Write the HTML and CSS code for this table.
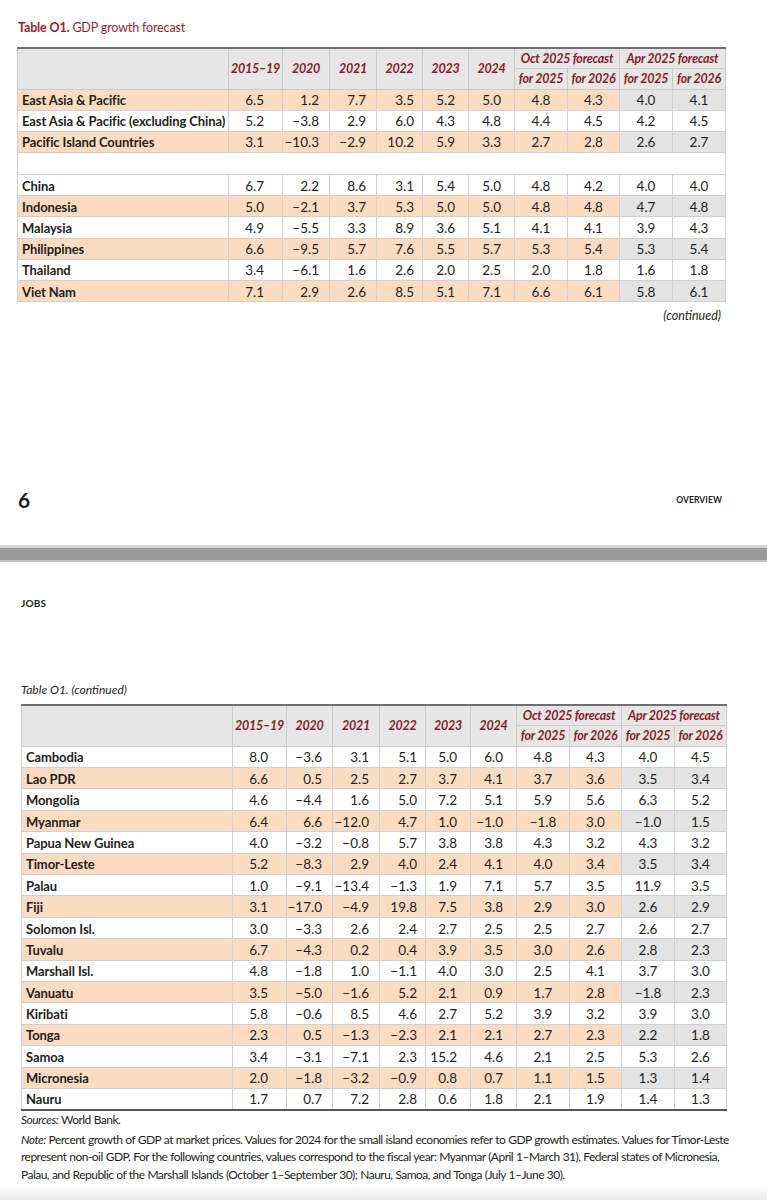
FILE: index.html
```html
<!DOCTYPE html>
<html lang="en">
<head>
<meta charset="utf-8">
<title>Table O1. GDP growth forecast</title>
<link rel="stylesheet" href="styles.css">
</head>
<body>
<section class="page page-one">
  <p class="title"><b>Table O1.</b> GDP growth forecast</p>
  <table class="gdp gdp-one">
    <colgroup>
      <col class="c-label1"><col class="c-a"><col class="c-b"><col class="c-b"><col class="c-c"><col class="c-c"><col class="c-d"><col class="c-e"><col class="c-f"><col class="c-e"><col class="c-e">
    </colgroup>
    <thead>
      <tr>
        <th rowspan="2"></th>
        <th rowspan="2">2015–19</th>
        <th rowspan="2">2020</th>
        <th rowspan="2">2021</th>
        <th rowspan="2">2022</th>
        <th rowspan="2">2023</th>
        <th rowspan="2">2024</th>
        <th colspan="2">Oct 2025 forecast</th>
        <th colspan="2">Apr 2025 forecast</th>
      </tr>
      <tr>
        <th>for 2025</th><th>for 2026</th><th>for 2025</th><th>for 2026</th>
      </tr>
    </thead>
    <tbody>
      <tr class="hl"><td>East Asia &amp; Pacific</td><td>6.5</td><td>1.2</td><td>7.7</td><td>3.5</td><td>5.2</td><td>5.0</td><td>4.8</td><td>4.3</td><td>4.0</td><td>4.1</td></tr>
      <tr><td>East Asia &amp; Pacific (excluding China)</td><td>5.2</td><td>−3.8</td><td>2.9</td><td>6.0</td><td>4.3</td><td>4.8</td><td>4.4</td><td>4.5</td><td>4.2</td><td>4.5</td></tr>
      <tr class="hl"><td>Pacific Island Countries</td><td>3.1</td><td>−10.3</td><td>−2.9</td><td>10.2</td><td>5.9</td><td>3.3</td><td>2.7</td><td>2.8</td><td>2.6</td><td>2.7</td></tr>
      <tr class="blank"><td colspan="11"></td></tr>
      <tr><td>China</td><td>6.7</td><td>2.2</td><td>8.6</td><td>3.1</td><td>5.4</td><td>5.0</td><td>4.8</td><td>4.2</td><td>4.0</td><td>4.0</td></tr>
      <tr class="hl"><td>Indonesia</td><td>5.0</td><td>−2.1</td><td>3.7</td><td>5.3</td><td>5.0</td><td>5.0</td><td>4.8</td><td>4.8</td><td>4.7</td><td>4.8</td></tr>
      <tr><td>Malaysia</td><td>4.9</td><td>−5.5</td><td>3.3</td><td>8.9</td><td>3.6</td><td>5.1</td><td>4.1</td><td>4.1</td><td>3.9</td><td>4.3</td></tr>
      <tr class="hl"><td>Philippines</td><td>6.6</td><td>−9.5</td><td>5.7</td><td>7.6</td><td>5.5</td><td>5.7</td><td>5.3</td><td>5.4</td><td>5.3</td><td>5.4</td></tr>
      <tr><td>Thailand</td><td>3.4</td><td>−6.1</td><td>1.6</td><td>2.6</td><td>2.0</td><td>2.5</td><td>2.0</td><td>1.8</td><td>1.6</td><td>1.8</td></tr>
      <tr class="hl"><td>Viet Nam</td><td>7.1</td><td>2.9</td><td>2.6</td><td>8.5</td><td>5.1</td><td>7.1</td><td>6.6</td><td>6.1</td><td>5.8</td><td>6.1</td></tr>
    </tbody>
  </table>
  <p class="continued">(continued)</p>
  <div class="folio">
    <span class="folio-num">6</span>
    <span class="folio-head">OVERVIEW</span>
  </div>
</section>

<div class="separator"></div>

<section class="page page-two">
  <p class="running-head">JOBS</p>
  <p class="caption">Table O1. (continued)</p>
  <table class="gdp gdp-two">
    <colgroup>
      <col class="c-label2"><col class="c-a"><col class="c-c"><col class="c-b"><col class="c-c"><col class="c-c2"><col class="c-c"><col class="c-e"><col class="c-f"><col class="c-e"><col class="c-f">
    </colgroup>
    <thead>
      <tr>
        <th rowspan="2"></th>
        <th rowspan="2">2015–19</th>
        <th rowspan="2">2020</th>
        <th rowspan="2">2021</th>
        <th rowspan="2">2022</th>
        <th rowspan="2">2023</th>
        <th rowspan="2">2024</th>
        <th colspan="2">Oct 2025 forecast</th>
        <th colspan="2">Apr 2025 forecast</th>
      </tr>
      <tr>
        <th>for 2025</th><th>for 2026</th><th>for 2025</th><th>for 2026</th>
      </tr>
    </thead>
    <tbody>
      <tr><td>Cambodia</td><td>8.0</td><td>−3.6</td><td>3.1</td><td>5.1</td><td>5.0</td><td>6.0</td><td>4.8</td><td>4.3</td><td>4.0</td><td>4.5</td></tr>
      <tr class="hl"><td>Lao PDR</td><td>6.6</td><td>0.5</td><td>2.5</td><td>2.7</td><td>3.7</td><td>4.1</td><td>3.7</td><td>3.6</td><td>3.5</td><td>3.4</td></tr>
      <tr><td>Mongolia</td><td>4.6</td><td>−4.4</td><td>1.6</td><td>5.0</td><td>7.2</td><td>5.1</td><td>5.9</td><td>5.6</td><td>6.3</td><td>5.2</td></tr>
      <tr class="hl"><td>Myanmar</td><td>6.4</td><td>6.6</td><td>−12.0</td><td>4.7</td><td>1.0</td><td>−1.0</td><td>−1.8</td><td>3.0</td><td>−1.0</td><td>1.5</td></tr>
      <tr><td>Papua New Guinea</td><td>4.0</td><td>−3.2</td><td>−0.8</td><td>5.7</td><td>3.8</td><td>3.8</td><td>4.3</td><td>3.2</td><td>4.3</td><td>3.2</td></tr>
      <tr class="hl"><td>Timor-Leste</td><td>5.2</td><td>−8.3</td><td>2.9</td><td>4.0</td><td>2.4</td><td>4.1</td><td>4.0</td><td>3.4</td><td>3.5</td><td>3.4</td></tr>
      <tr><td>Palau</td><td>1.0</td><td>−9.1</td><td>−13.4</td><td>−1.3</td><td>1.9</td><td>7.1</td><td>5.7</td><td>3.5</td><td>11.9</td><td>3.5</td></tr>
      <tr class="hl"><td>Fiji</td><td>3.1</td><td>−17.0</td><td>−4.9</td><td>19.8</td><td>7.5</td><td>3.8</td><td>2.9</td><td>3.0</td><td>2.6</td><td>2.9</td></tr>
      <tr><td>Solomon Isl.</td><td>3.0</td><td>−3.3</td><td>2.6</td><td>2.4</td><td>2.7</td><td>2.5</td><td>2.5</td><td>2.7</td><td>2.6</td><td>2.7</td></tr>
      <tr class="hl"><td>Tuvalu</td><td>6.7</td><td>−4.3</td><td>0.2</td><td>0.4</td><td>3.9</td><td>3.5</td><td>3.0</td><td>2.6</td><td>2.8</td><td>2.3</td></tr>
      <tr><td>Marshall Isl.</td><td>4.8</td><td>−1.8</td><td>1.0</td><td>−1.1</td><td>4.0</td><td>3.0</td><td>2.5</td><td>4.1</td><td>3.7</td><td>3.0</td></tr>
      <tr class="hl"><td>Vanuatu</td><td>3.5</td><td>−5.0</td><td>−1.6</td><td>5.2</td><td>2.1</td><td>0.9</td><td>1.7</td><td>2.8</td><td>−1.8</td><td>2.3</td></tr>
      <tr><td>Kiribati</td><td>5.8</td><td>−0.6</td><td>8.5</td><td>4.6</td><td>2.7</td><td>5.2</td><td>3.9</td><td>3.2</td><td>3.9</td><td>3.0</td></tr>
      <tr class="hl"><td>Tonga</td><td>2.3</td><td>0.5</td><td>−1.3</td><td>−2.3</td><td>2.1</td><td>2.1</td><td>2.7</td><td>2.3</td><td>2.2</td><td>1.8</td></tr>
      <tr><td>Samoa</td><td>3.4</td><td>−3.1</td><td>−7.1</td><td>2.3</td><td>15.2</td><td>4.6</td><td>2.1</td><td>2.5</td><td>5.3</td><td>2.6</td></tr>
      <tr class="hl"><td>Micronesia</td><td>2.0</td><td>−1.8</td><td>−3.2</td><td>−0.9</td><td>0.8</td><td>0.7</td><td>1.1</td><td>1.5</td><td>1.3</td><td>1.4</td></tr>
      <tr><td>Nauru</td><td>1.7</td><td>0.7</td><td>7.2</td><td>2.8</td><td>0.6</td><td>1.8</td><td>2.1</td><td>1.9</td><td>1.4</td><td>1.3</td></tr>
    </tbody>
  </table>
  <div class="notes">
    <p class="sources"><i>Sources:</i> World Bank.</p>
    <p><i>Note:</i> Percent growth of GDP at market prices. Values for 2024 for the small island economies refer to GDP growth estimates. Values for Timor-Leste<br>represent non-oil GDP. For the following countries, values correspond to the fiscal year: Myanmar (April 1–March 31), Federal states of Micronesia,<br>Palau, and Republic of the Marshall Islands (October 1–September 30); Nauru, Samoa, and Tonga (July 1–June 30).</p>
  </div>
</section>
</body>
</html>
```

FILE: styles.css
```css
* { box-sizing: border-box; }

html {
  min-height: 1200px;
  background: linear-gradient(to bottom, #ffffff 0, #ffffff 1184px, #ebebeb 1200px);
}

body {
  margin: 0;
  color: #231f20;
  font-family: Lato, "Open Sans", sans-serif;
}

p { margin: 0; }

.page-one {
  padding: 20px 0 0 17px;
}

.title {
  font-size: 12.5px;
  line-height: 16px;
  letter-spacing: -0.15px;
  color: #9e1d30;
  margin: 0 0 11px 1px;
}
.title b { font-weight: 700; }

.gdp {
  border-collapse: collapse;
  table-layout: fixed;
  font-size: 13.5px;
  background: #ffffff;
}
.gdp-one { width: 706px; }
.gdp-two { width: 705px; }

.c-label1 { width: 211px; }
.c-label2 { width: 211px; }
.c-a { width: 54px; }
.c-b { width: 47px; }
.c-c { width: 46px; }
.c-c2 { width: 45px; }
.c-d { width: 46px; }
.c-e { width: 53px; }
.c-f { width: 52px; }

.gdp th {
  background: #e6e6e6;
  color: #8a1b2c;
  font-style: italic;
  font-weight: 700;
  font-size: 12.5px;
  letter-spacing: -0.25px;
  border: 1px solid #cbcbcb;
  height: 20.5px;
  padding: 0;
  text-align: center;
  white-space: nowrap;
}
.gdp thead tr:first-child th { border-top: 2px solid #707070; }

.gdp td {
  height: 21.4px;
  padding: 1px 0 0;
  border: 1px solid #d0d0d0;
  text-align: right;
  white-space: nowrap;
}
.gdp-one td { height: 21.2px; }
.gdp td:first-child {
  text-align: left;
  font-weight: 700;
  font-size: 13px;
  letter-spacing: -0.1px;
  padding-left: 4px;
}
.gdp td:nth-child(2) { padding-right: 18px; }
.gdp td:nth-child(3),
.gdp td:nth-child(4) { padding-right: 10px; }
.gdp td:nth-child(5) { padding-right: 8px; }
.gdp td:nth-child(6),
.gdp td:nth-child(7) { padding-right: 13px; }
.gdp td:nth-child(n+8) { text-align: center; }

.gdp tr.hl td { background: #fbdcc0; }
.gdp tr.hl td:nth-child(n+10) { background: #e3e3e4; }

.gdp tr.blank td {
  height: 22px;
  background: #ffffff;
}

.gdp-two tbody tr:last-child td { border-bottom: 2px solid #555555; }

.continued {
  width: 706px;
  text-align: right;
  font-style: italic;
  font-size: 12.5px;
  line-height: 14px;
  margin-top: 7px;
  padding-right: 2px;
}

.folio {
  width: 706px;
  display: flex;
  justify-content: space-between;
  align-items: center;
  margin-top: 165px;
}
.folio-num {
  font-size: 21px;
  line-height: 24px;
  font-weight: 700;
  padding-left: 1px;
}
.folio-head {
  font-size: 8.5px;
  font-weight: 700;
  letter-spacing: 0.1px;
  padding-right: 1px;
}

.separator {
  margin-top: 33px;
  height: 17px;
  background: #9a9a9a;
  border-top: 3px solid #d6d6d6;
  border-bottom: 2px solid #c2c2c2;
}

.page-two {
  padding: 0 0 0 21px;
}

.running-head {
  margin-top: 35px;
  font-size: 10px;
  line-height: 12px;
  font-weight: 700;
  letter-spacing: 0.2px;
}

.caption {
  margin-top: 74px;
  font-size: 12px;
  line-height: 14px;
  font-style: italic;
  margin-bottom: 7px;
}

.notes {
  margin-top: 0;
  width: 720px;
  font-size: 12px;
  line-height: 17.5px;
  letter-spacing: -0.52px;
  word-spacing: 0.3px;
  white-space: nowrap;
}
.sources { margin-bottom: 2.5px; }
```
